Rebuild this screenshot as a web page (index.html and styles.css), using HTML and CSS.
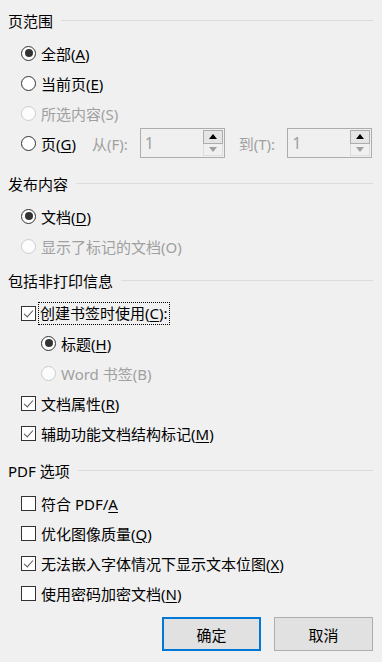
FILE: index.html
```html
<!DOCTYPE html>
<html lang="zh-CN">
<head>
    <meta charset="utf-8">
    <title>选项</title>
    <link rel="stylesheet" href="styles.css">
</head>
<body>
    <div class="dialog">
        <!-- 页范围 -->
        <div class="group group-range">
            <div class="group-title"><span>页范围</span></div>
            <div class="row"><span class="radio checked"></span><span class="label">全部(<u>A</u>)</span></div>
            <div class="row"><span class="radio"></span><span class="label">当前页(<u>E</u>)</span></div>
            <div class="row disabled"><span class="radio"></span><span class="label">所选内容(S)</span></div>
            <div class="row">
                <span class="radio"></span><span class="label">页(<u>G</u>)</span>
                <span class="field-label from">从(F):</span>
                <span class="spin"><span class="spin-value">1</span><span class="spin-btns"><span class="up"></span><span class="down"></span></span></span>
                <span class="field-label to">到(T):</span>
                <span class="spin"><span class="spin-value">1</span><span class="spin-btns"><span class="up"></span><span class="down"></span></span></span>
            </div>
        </div>

        <!-- 发布内容 -->
        <div class="group group-publish">
            <div class="group-title"><span>发布内容</span></div>
            <div class="row"><span class="radio checked"></span><span class="label">文档(<u>D</u>)</span></div>
            <div class="row disabled"><span class="radio"></span><span class="label">显示了标记的文档(O)</span></div>
        </div>

        <!-- 包括非打印信息 -->
        <div class="group group-nonprint">
            <div class="group-title"><span>包括非打印信息</span></div>
            <div class="row"><span class="check checked"></span><span class="label focus">创建书签时使用(<u>C</u>):</span></div>
            <div class="row sub"><span class="radio checked"></span><span class="label">标题(<u>H</u>)</span></div>
            <div class="row sub disabled"><span class="radio"></span><span class="label">Word 书签(B)</span></div>
            <div class="row"><span class="check checked"></span><span class="label">文档属性(<u>R</u>)</span></div>
            <div class="row"><span class="check checked"></span><span class="label">辅助功能文档结构标记(<u>M</u>)</span></div>
        </div>

        <!-- PDF 选项 -->
        <div class="group group-pdf">
            <div class="group-title"><span>PDF 选项</span></div>
            <div class="row"><span class="check"></span><span class="label">符合 PDF/<u>A</u></span></div>
            <div class="row"><span class="check"></span><span class="label">优化图像质量(<u>Q</u>)</span></div>
            <div class="row"><span class="check checked"></span><span class="label">无法嵌入字体情况下显示文本位图(<u>X</u>)</span></div>
            <div class="row"><span class="check"></span><span class="label">使用密码加密文档(<u>N</u>)</span></div>
        </div>

        <div class="buttons">
            <button class="btn default">确定</button>
            <button class="btn">取消</button>
        </div>
    </div>
</body>
</html>
```

FILE: styles.css
```css
body {
    margin: 0;
    background: #f0f0f0;
    font-family: "Noto Sans", "Noto Sans CJK SC", sans-serif;
    font-size: 15px;
    color: #000;
}
.dialog {
    padding: 10px 9px 0 8px;
}
u {
    text-decoration-thickness: 1px;
    text-underline-offset: 2px;
}
.group-title {
    display: flex;
    align-items: center;
    height: 20px;
    margin-bottom: 8px;
}
.group-title::after {
    content: "";
    flex: 1;
    height: 1px;
    background: #dcdcdc;
    margin-left: 8px;
}
.group-publish { margin-top: 15px; }
.group-nonprint { margin-top: 9px; }
.group-pdf { margin-top: 12px; }

.row {
    display: flex;
    align-items: center;
    height: 30px;
    padding-left: 13px;
}
.row.sub {
    padding-left: 33px;
}
.label {
    margin-left: 5px;
    white-space: nowrap;
}
.disabled .label, .field-label {
    color: #a0a0a0;
}
.label.focus {
    outline: 1px dotted #000;
    outline-offset: 0;
    padding: 0 1px;
    margin-left: 3px;
    line-height: 21px;
}

/* radio */
.radio {
    width: 13px;
    height: 13px;
    border: 1px solid #333;
    border-radius: 50%;
    background: #fff;
    position: relative;
    flex: none;
}
.radio.checked::after {
    content: "";
    position: absolute;
    left: 2.5px;
    top: 2.5px;
    width: 8px;
    height: 8px;
    border-radius: 50%;
    background: #333;
}
.disabled .radio {
    border-color: #ccc;
    background: #fcfcfc;
}

/* checkbox */
.check {
    width: 13px;
    height: 13px;
    border: 1px solid #333;
    background: #fff;
    position: relative;
    flex: none;
}
.check.checked::after {
    content: "";
    position: absolute;
    left: 4px;
    top: 1px;
    width: 4px;
    height: 8px;
    border: solid #555;
    border-width: 0 1px 1px 0;
    transform: rotate(42deg);
}

/* spin boxes */
.field-label.from { margin-left: 16px; }
.field-label.to { margin-left: 14px; }
.spin {
    display: flex;
    width: 83px;
    height: 28px;
    border: 1px solid #adadad;
    background: #f0f0f0;
    margin-left: 12px;
}
.spin-value {
    flex: 1;
    color: #a0a0a0;
    padding-left: 4px;
    line-height: 28px;
    font-size: 16px;
}
.spin-btns {
    display: flex;
    flex-direction: column;
    width: 20px;
    margin: 1px 1px 1px 0;
}
.spin-btns span {
    flex: 1;
    position: relative;
}
.spin-btns .up {
    background: #e5e5e5;
    border: 1px solid #adadad;
}
.spin-btns .down {
    background: #f0f0f0;
    border: 1px solid #dcdcdc;
    border-top: none;
}
.spin-btns .up::after, .spin-btns .down::after {
    content: "";
    position: absolute;
    left: 50%;
    top: 50%;
    margin-left: -4px;
    border-left: 4px solid transparent;
    border-right: 4px solid transparent;
}
.spin-btns .up::after {
    margin-top: -3px;
    border-bottom: 5px solid #000;
}
.spin-btns .down::after {
    margin-top: -2px;
    border-top: 5px solid #a0a0a0;
}

/* buttons */
.buttons {
    display: flex;
    justify-content: flex-end;
    gap: 13px;
    margin-top: 9px;
}
.btn {
    width: 99px;
    height: 34px;
    background: #e1e1e1;
    border: 1px solid #adadad;
    font-family: inherit;
    font-size: 15px;
    color: #000;
    padding: 0;
}
.btn.default {
    border: 2px solid #0078d7;
}
```
